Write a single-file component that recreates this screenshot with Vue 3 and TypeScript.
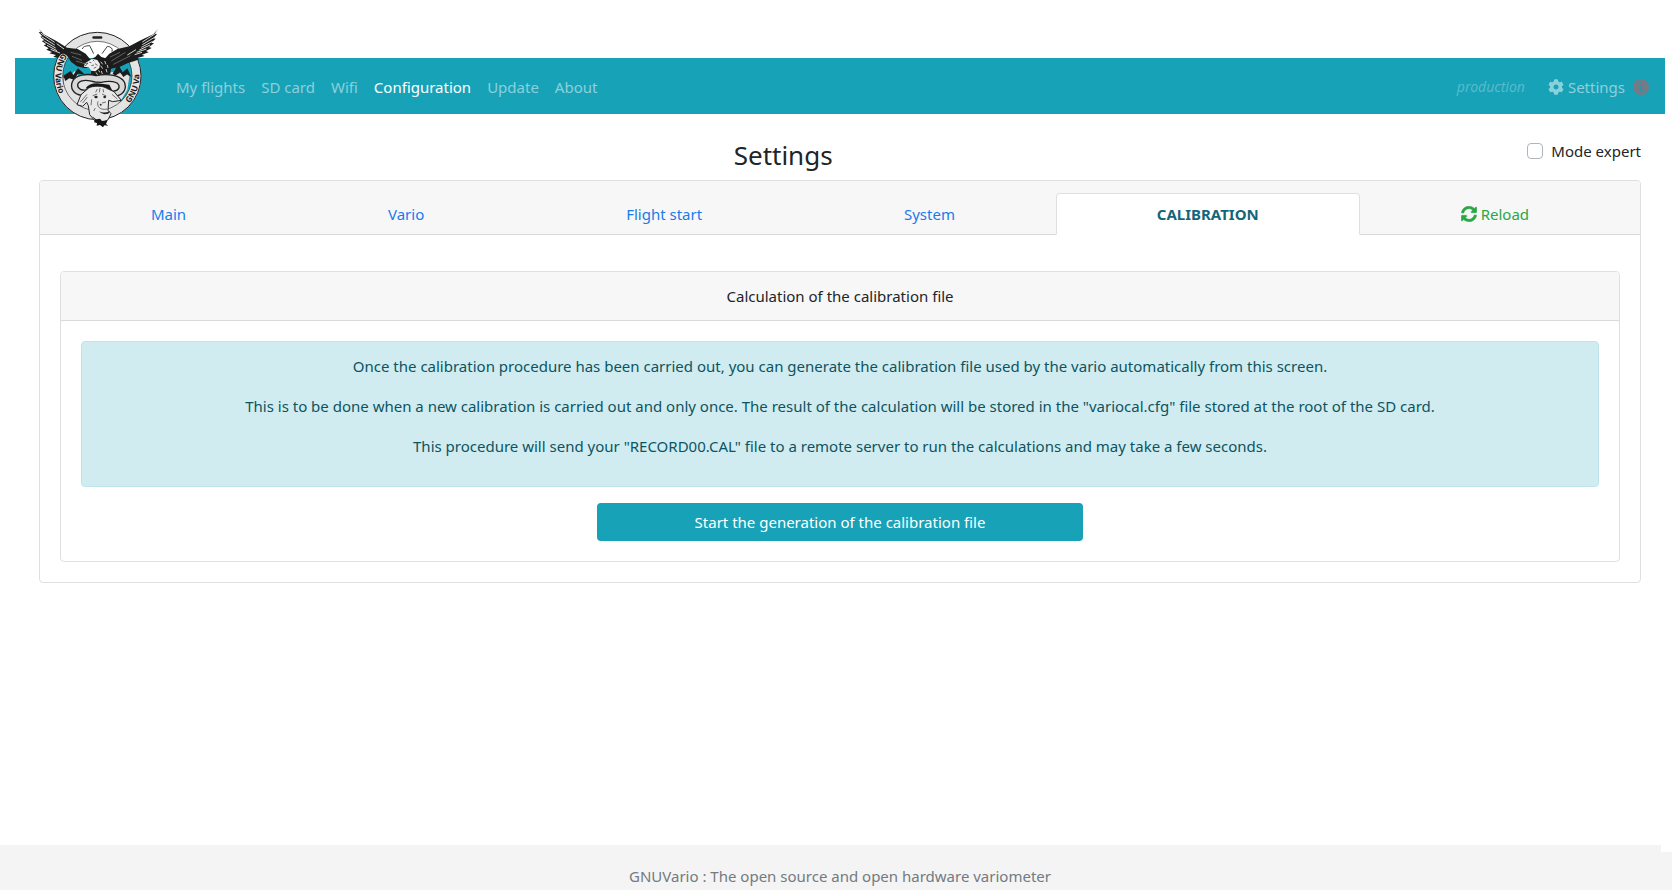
<script setup lang="ts">
import { ref } from 'vue'

interface NavItem {
  label: string
  active?: boolean
}

const navItems: NavItem[] = [
  { label: 'My flights' },
  { label: 'SD card' },
  { label: 'Wifi' },
  { label: 'Configuration', active: true },
  { label: 'Update' },
  { label: 'About' },
]

const tabs: string[] = ['Main', 'Vario', 'Flight start', 'System', 'CALIBRATION']
const activeTab = ref('CALIBRATION')
const expert = ref(false)
</script>

<template>
  <div class="page">
    <header class="navbar">
      <a class="brand" href="#" aria-label="GNU Vario">
        <svg class="logo" viewBox="111 36 369 303" role="img" aria-hidden="true">
          <defs>
            <path id="arc-left" d="M187 114A126 126 0 0 0 214 282" />
            <path id="arc-right" d="M388 265A126 126 0 0 0 400 118" />
          </defs>
          <!-- mountains and lower disc -->
          <path d="M190 190l24-10 10-12 12 14 80 0 20-12 16 8 18-6 18 12-6 40-30 50-60 30-60-16-36-40z" fill="#e2e2e2" />
          <path d="M190 182l22-14 8 12 14-20 20 18-20-2-12 18-14-4-12 8zM338 176l16-28 14 24 14-12 12 26-12-8-12 8-10-14-14 10z" fill="#1c1c1c" />
          <!-- ring -->
          <circle cx="292" cy="183" r="118" fill="none" stroke="#e4e4e4" stroke-width="27" />
          <circle cx="292" cy="183" r="131" fill="none" stroke="#222" stroke-width="3" />
          <circle cx="292" cy="183" r="104" fill="none" stroke="#333" stroke-width="2" />
          <rect x="277" y="64" width="30" height="7" rx="3" fill="#222" />
          <!-- wings -->
          <path d="M117 42l14 16 38 20 32 20 32 4 24 14 16 20 2 18-20 6-24-6-18-14-12-18-12-6-17 13-12-4 8-5-20-5 8-4-17-7 7-4-15-9 8-3-14-10 8-2-12-11 6-1-11-12 7-1z" fill="#1d1d1d" />
          <path d="M474 42l-14 16-38 18-34 18-36 8-24 14-18 20 0 20 20 6 28-6 26-12 20-6 14-5-6-4 22-6-8-4 20-7-8-4 17-9-8-3 15-11-8-2 13-12-7-1 11-13-7-1z" fill="#1d1d1d" />
          <path d="M122 54l42 28M126 66l38 24M133 79l34 20M141 91l30 16M152 103l28 11M170 86l22 16M469 54l-42 27M465 66l-38 23M458 79l-34 18M450 90l-32 15M439 102l-29 10M426 112l-22 7M408 104l-26 16" fill="none" stroke="#d6d6d6" stroke-width="3" />
          <path d="M212 112l32 8M216 124l30 12M228 138l26 8M376 112l-42 26M392 122l-52 26M360 112l-30 14" fill="none" stroke="#858585" stroke-width="2" />
          <path d="M247 102q2-10 22-10l12 24M306 116l16-22q18 2 14 16" fill="none" stroke="#444" stroke-width="3" />
          <text class="ring-text"><textPath href="#arc-left">GNU Vario</textPath></text>
          <text class="ring-text"><textPath href="#arc-right">GNU Va</textPath></text>
          <!-- eagle body -->
          <path d="M268 134l18-8 8-10 10 10 22 6 8 24-4 24-14 8-16-6-14 8-14-6 2-22z" fill="#1b1b1b" />
          <path d="M252 146l14-8 10-7 16 4 8 12-2 12-12 10-12-2-8-10-14-2z" fill="#eee" />
          <path d="M252 147l12-3-8 9zM268 142l6 1M278 134l5 5M274 152l8-2M285 146l8 5M281 160l8-4" fill="none" stroke="#333" stroke-width="2" />
          <path d="M302 140l6 8M314 138l4 10M302 152l6 9M288 172l5 8M304 168l3 9M318 162l3 10M322 150l2 9M296 166l3 6" fill="none" stroke="#c8c8c8" stroke-width="3" />
          <!-- horns -->
          <path d="M288 182c-28-8-62-2-71 18-7 18 2 38 28 41l18-1 0-16c-16 4-31-2-30-15 3-14 26-16 52-8l18 1c26-6 50-3 54 10 2 12-9 19-26 15l-1 15 18 1c24-4 33-23 25-42-11-20-48-27-85-19z" fill="#d8d8d8" stroke="#202020" stroke-width="4" stroke-linejoin="round" />
          <path d="M257 220q10-15 34-15l37 4 10 20-18-8-52 3z" fill="#171717" />
          <!-- gnu head -->
          <path d="M266 219c12-7 42-8 54 1l22 10 22 26-26 4-12-4-2 30 9 10-8 17-18 12-20-5-18-21-4-27-5-10-12 12-17-5 12-30z" fill="#e8e8e8" stroke="#242424" stroke-width="3" stroke-linejoin="round" />
          <path d="M241 261l20-23M248 264l14-18M336 238l16 14M278 242l14-5M306 237l13 6M275 253l-2 18M292 222l-5 10M300 219l-2 13M309 222l2 10M294 259c-5 15 6 28 28 23M306 264l12-3M286 279l-5 9" fill="none" stroke="#333" stroke-width="2" />
          <ellipse cx="288" cy="246" rx="5" ry="4" fill="#222" />
          <ellipse cx="314" cy="246" rx="4" ry="4" fill="#222" />
          <circle cx="302" cy="269" r="3" fill="#333" />
          <path d="M297 289q15 8 33-1l-5 8-12 2-10-4z" fill="#232323" />
          <path d="M276 303l12 10 12-2 6 7 17-2-5 11 7 5-12-1-4 6-9-7-10 2 1-8-9-2 3-7z" fill="#161616" />
        </svg>
      </a>
      <nav class="nav" aria-label="Primary">
        <a v-for="item in navItems" :key="item.label" href="#" :class="{ active: item.active }">{{ item.label }}</a>
      </nav>
      <span class="env">production</span>
      <a class="settings-link" href="#">
        <svg width="16" height="16" viewBox="0 0 512 512" aria-hidden="true">
          <path fill="currentColor" d="M487.400 315.700l-42.600-24.600c4.300-23.200 4.300-47 0-70.200l42.600-24.600c4.900-2.800 7.100-8.600 5.500-14-11.100-35.600-30-67.800-54.700-94.600-3.800-4.100-10-5.100-14.800-2.300L380.800 110c-17.900-15.400-38.500-27.300-60.800-35.100V25.800c0-5.600-3.900-10.500-9.400-11.700-36.700-8.200-74.300-7.800-109.200 0-5.500 1.200-9.400 6.100-9.400 11.700V75c-22.200 7.900-42.800 19.800-60.800 35.100L88.700 85.500c-4.900-2.800-11-1.900-14.800 2.300-24.700 26.700-43.600 58.900-54.700 94.600-1.700 5.400.6 11.200 5.500 14L67.300 221c-4.300 23.200-4.300 47 0 70.200l-42.600 24.600c-4.900 2.800-7.100 8.600-5.500 14 11.100 35.600 30 67.800 54.700 94.600 3.800 4.100 10 5.100 14.800 2.300l42.600-24.600c17.900 15.400 38.500 27.300 60.800 35.100v49.200c0 5.600 3.900 10.500 9.400 11.700 36.700 8.200 74.300 7.800 109.200 0 5.500-1.200 9.400-6.100 9.400-11.700v-49.200c22.200-7.900 42.800-19.800 60.800-35.100l42.600 24.600c4.900 2.800 11 1.900 14.800-2.300 24.700-26.700 43.600-58.900 54.700-94.600 1.500-5.500-.7-11.300-5.600-14.100zM256 336c-44.100 0-80-35.900-80-80s35.900-80 80-80 80 35.900 80 80-35.900 80-80 80z" />
        </svg>
        <span>Settings</span>
      </a>
      <svg class="info" width="16" height="16" viewBox="0 0 16 16" role="img" aria-label="Information">
        <circle cx="8" cy="8" r="8" fill="#737b86" />
        <path d="M7 3h2v2H7zM6 6h3v5h1v1H6v-1h1V7H6z" fill="#2f93a6" />
      </svg>
    </header>

    <main class="content">
      <div class="title-row">
        <h1>Settings</h1>
        <label class="expert"><input v-model="expert" type="checkbox" /><span>Mode expert</span></label>
      </div>

      <section class="card">
        <div class="tabs" role="tablist">
          <button
            v-for="tab in tabs"
            :key="tab"
            type="button"
            role="tab"
            class="tab"
            :class="{ active: activeTab === tab }"
            :aria-selected="activeTab === tab"
            @click="activeTab = tab"
          >{{ tab }}</button>
          <button type="button" class="tab reload">
            <svg width="16" height="16" viewBox="0 0 512 512" aria-hidden="true">
              <path fill="currentColor" stroke="currentColor" stroke-width="14" d="M370.720 133.280C339.458 104.008 298.888 87.962 255.848 88c-77.458.068-144.328 53.178-162.791 126.850-1.344 5.363-6.122 9.150-11.651 9.150H24.103c-7.498 0-13.194-6.807-11.807-14.176C33.933 94.924 134.813 8 256 8c66.448 0 126.791 26.136 171.315 68.685L463.030 40.970C478.149 25.851 504 36.559 504 57.941V192c0 13.255-10.745 24-24 24H345.941c-21.382 0-32.090-25.851-16.971-40.971l41.750-41.749zM32 296h134.059c21.382 0 32.090 25.851 16.971 40.971l-41.750 41.750c31.262 29.273 71.835 45.319 114.876 45.280 77.418-.070 144.315-53.144 162.787-126.849 1.344-5.363 6.122-9.150 11.651-9.150h57.304c7.498 0 13.194 6.807 11.807 14.176C478.067 417.076 377.187 504 256 504c-66.448 0-126.791-26.136-171.315-68.685L48.970 471.030C33.851 486.149 8 475.441 8 454.059V320c0-13.255 10.745-24 24-24z" />
            </svg>
            <span>Reload</span>
          </button>
        </div>

        <div class="card-body outer-body">
          <section class="card">
            <h2 class="card-header">Calculation of the calibration file</h2>
            <div class="card-body">
              <div class="alert">
                <p>Once the calibration procedure has been carried out, you can generate the calibration file used by the vario automatically from this screen.</p>
                <p>This is to be done when a new calibration is carried out and only once. The result of the calculation will be stored in the "variocal.cfg" file stored at the root of the SD card.</p>
                <p>This procedure will send your "RECORD00.CAL" file to a remote server to run the calculations and may take a few seconds.</p>
              </div>
              <div class="actions">
                <button type="button" class="start">Start the generation of the calibration file</button>
              </div>
            </div>
          </section>
        </div>
      </section>
    </main>

    <footer class="footer">GNUVario : The open source and open hardware variometer</footer>
  </div>
</template>

<style>
body {
  margin: 0;
  background: #fff;
}
</style>

<style scoped>
.page {
  box-sizing: border-box;
  min-height: 100vh;
  display: flex;
  flex-direction: column;
  padding-top: 58px;
  font-family: "Segoe UI", "Noto Sans", sans-serif;
  font-size: 15px;
  line-height: 24px;
  color: #212529;
}
.page *,
.page *::before {
  box-sizing: border-box;
}
a {
  text-decoration: none;
}
button {
  font: inherit;
  cursor: pointer;
}
.navbar {
  display: flex;
  align-items: center;
  height: 56px;
  margin: 0 7px 0 15px;
  padding: 2px 16px 0 22px;
  background: #17a2b8;
}
.brand {
  display: flex;
  margin-right: 8px;
}
.logo {
  width: 123px;
  height: 101px;
  margin: -34px 0 -14px;
}
.ring-text {
  font-family: "Noto Sans", sans-serif;
  font-size: 25px;
  font-weight: 700;
  fill: #1a1a1a;
  stroke: #e4e4e4;
  stroke-width: 3px;
  paint-order: stroke;
}
.nav {
  display: flex;
  flex: 1;
}
.nav a {
  padding: 8px;
  color: rgba(255, 255, 255, 0.5);
}
.nav a.active {
  color: #fff;
}
.env {
  margin-right: 23px;
  font-size: 14px;
  font-style: italic;
  color: rgba(255, 255, 255, 0.28);
}
.settings-link {
  display: flex;
  align-items: center;
  gap: 4px;
  margin-right: 8px;
  color: rgba(255, 255, 255, 0.5);
}
.content {
  flex: 1;
  padding: 24px 31px 24px 39px;
}
.title-row {
  display: flex;
  align-items: flex-start;
  height: 42px;
}
h1 {
  flex: 1;
  margin: 0;
  font-size: 26px;
  line-height: 35px;
  font-weight: 400;
  text-align: center;
}
.expert {
  display: flex;
  align-items: center;
  gap: 8px;
  line-height: 26px;
}
.expert input {
  appearance: none;
  width: 16px;
  height: 16px;
  margin: 0;
  border: 1px solid #adb5bd;
  border-radius: 4px;
  background: #fff;
}
.expert input:checked {
  background: #17a2b8;
}
.card {
  border: 1px solid #dfdfdf;
  border-radius: 4px;
  background: #fff;
}
.tabs {
  display: flex;
  padding: 12px 10px 0;
  background: #f7f7f7;
  border-radius: 3px 3px 0 0;
  box-shadow: inset 0 -1px #d9d9d9;
}
.tab {
  flex: 1 1 auto;
  display: flex;
  justify-content: center;
  align-items: center;
  gap: 4px;
  padding: 8px 16px;
  border: 1px solid transparent;
  border-radius: 4px 4px 0 0;
  background: none;
  color: #1a7bea;
}
.tab.active {
  border-color: #dfdfdf;
  border-bottom-color: #fff;
  background: #fff;
  color: #14657a;
  font-weight: 700;
}
.tab.reload {
  color: #28a745;
}
.card-body {
  padding: 20px;
}
.outer-body {
  padding-top: 36px;
}
.card-header {
  margin: 0;
  padding: 12px 20px;
  border-bottom: 1px solid #d9d9d9;
  border-radius: 3px 3px 0 0;
  background: #f7f7f7;
  font-size: 15px;
  font-weight: 400;
  text-align: center;
}
.alert {
  padding: 12px 20px;
  border: 1px solid #bee5eb;
  border-radius: 4px;
  background: #d1ecf1;
  color: #0c5460;
  text-align: center;
}
.alert p {
  margin: 0 0 16px;
}
.actions {
  display: grid;
  grid-template-columns: repeat(3, 1fr);
  column-gap: 30px;
  margin-top: 16px;
}
.start {
  grid-column: 2;
  height: 38px;
  padding: 0 12px;
  border: 0;
  border-radius: 4px;
  background: #17a2b8;
  color: #fff;
}
.footer {
  position: relative;
  padding: 19px 20px 2px 28px;
  background: #f4f4f4;
  color: #737a80;
  text-align: center;
}
.footer::before {
  content: "";
  position: absolute;
  top: 0;
  right: 0;
  width: 11px;
  height: 7px;
  background: #fff;
}
</style>
